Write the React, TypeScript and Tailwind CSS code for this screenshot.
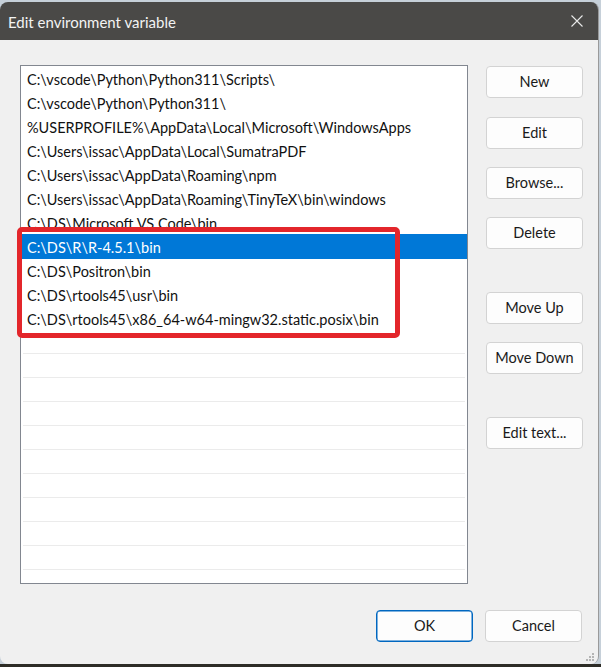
const paths = [
  "C:\\vscode\\Python\\Python311\\Scripts\\",
  "C:\\vscode\\Python\\Python311\\",
  "%USERPROFILE%\\AppData\\Local\\Microsoft\\WindowsApps",
  "C:\\Users\\issac\\AppData\\Local\\SumatraPDF",
  "C:\\Users\\issac\\AppData\\Roaming\\npm",
  "C:\\Users\\issac\\AppData\\Roaming\\TinyTeX\\bin\\windows",
  "C:\\DS\\Microsoft VS Code\\bin",
  "C:\\DS\\R\\R-4.5.1\\bin",
  "C:\\DS\\Positron\\bin",
  "C:\\DS\\rtools45\\usr\\bin",
  "C:\\DS\\rtools45\\x86_64-w64-mingw32.static.posix\\bin",
];

const selected = 7;
const totalRows = 22;

// side buttons with their vertical spacing
const sideButtons = [
  { label: "New", cls: "mt-[1px]" },
  { label: "Edit", cls: "mt-[19px]" },
  { label: "Browse...", cls: "mt-[18px]" },
  { label: "Delete", cls: "mt-[18px]" },
  { label: "Move Up", cls: "mt-[43px]" },
  { label: "Move Down", cls: "mt-[18px]" },
  { label: "Edit text...", cls: "mt-[43px]" },
];

function WinButton({ label, className = "", primary = false }: { label: string; className?: string; primary?: boolean }) {
  return (
    <button
      className={`h-[32px] w-[97px] rounded-[4px] bg-[#fdfdfd] text-[14.5px] text-[#1a1a1a] flex items-center justify-center ${
        primary ? "border border-[#0067c0] shadow-[inset_0_0_0_0.5px_#0067c0]" : "border border-[#d3d3d3]"
      } ${className}`}
    >
      {label}
    </button>
  );
}

function CloseIcon() {
  return (
    <svg width="12" height="12" viewBox="0 0 12 12" className="text-[#e8e8e8]">
      <path d="M0.5 0.5 L11.5 11.5 M11.5 0.5 L0.5 11.5" stroke="currentColor" strokeWidth="1.1" />
    </svg>
  );
}

function ResizeGrip() {
  return (
    <svg width="9" height="9" viewBox="0 0 9 9" className="absolute right-[3px] bottom-[2px]">
      <g fill="#b4b4b4">
        <rect x="6" y="0" width="2" height="2" />
        <rect x="3" y="3" width="2" height="2" />
        <rect x="6" y="3" width="2" height="2" />
        <rect x="0" y="6" width="2" height="2" />
        <rect x="3" y="6" width="2" height="2" />
        <rect x="6" y="6" width="2" height="2" />
      </g>
    </svg>
  );
}

export default function App() {
  return (
    <div
      className="w-[601px] h-[667px] flex flex-col overflow-hidden bg-[#c6d0d9]"
      style={{ fontFamily: 'Lato, "Noto Sans", sans-serif' }}
    >
      <div className="h-[2px] shrink-0" />
      {/* dialog window */}
      <div className="w-[599px] h-[662px] shrink-0 flex flex-col rounded-t-[8px] rounded-b-[8px] overflow-hidden border-r border-[#9a9a9a]">
        {/* title bar */}
        <div className="h-[38px] shrink-0 bg-[#4a4947] flex items-center justify-between pl-[8px] pr-[15px]">
          <span className="text-[15px] text-[#f3f3f3] leading-none pt-[2px]">Edit environment variable</span>
          <CloseIcon />
        </div>

        {/* body */}
        <div className="relative flex-1 bg-[#f0f0f0] flex flex-col pl-[20px] pt-[25px]">
          <div className="flex">
            {/* path list */}
            <div className="w-[448px] h-[519px] border border-[#828790] bg-white overflow-hidden">
              {Array.from({ length: totalRows }).map((_, i) => {
                const text = paths[i];
                const isSel = i === selected;
                return (
                  <div key={i} className="h-[24px] flex flex-col">
                    <div
                      className={`flex-1 flex items-center pl-[6px] text-[14.5px] whitespace-nowrap ${
                        isSel ? "bg-[#0078d7] text-white" : "text-[#111]"
                      }`}
                    >
                      <span className="mt-[3px]">{text ?? ""}</span>
                    </div>
                    <div className={`h-[1px] mx-[2px] ${isSel ? "bg-[#0078d7]" : "bg-[#ebebeb]"}`} />
                  </div>
                );
              })}
            </div>

            {/* action buttons */}
            <div className="ml-[18px] flex flex-col">
              {sideButtons.map((b) => (
                <WinButton key={b.label} label={b.label} className={b.cls} />
              ))}
            </div>
          </div>

          {/* ok / cancel */}
          <div className="mt-[26px] flex justify-end gap-[12px] pr-[16px]">
            <WinButton label="OK" primary />
            <WinButton label="Cancel" />
          </div>

          {/* highlight box around the new entries */}
          <div className="absolute left-[17px] top-[187px] w-[383px] h-[111px] border-[5px] border-[#e3262b] rounded-[5px]" />

          <ResizeGrip />
        </div>
      </div>
      <div className="flex-1 bg-[#2d2c26]" />
    </div>
  );
}
